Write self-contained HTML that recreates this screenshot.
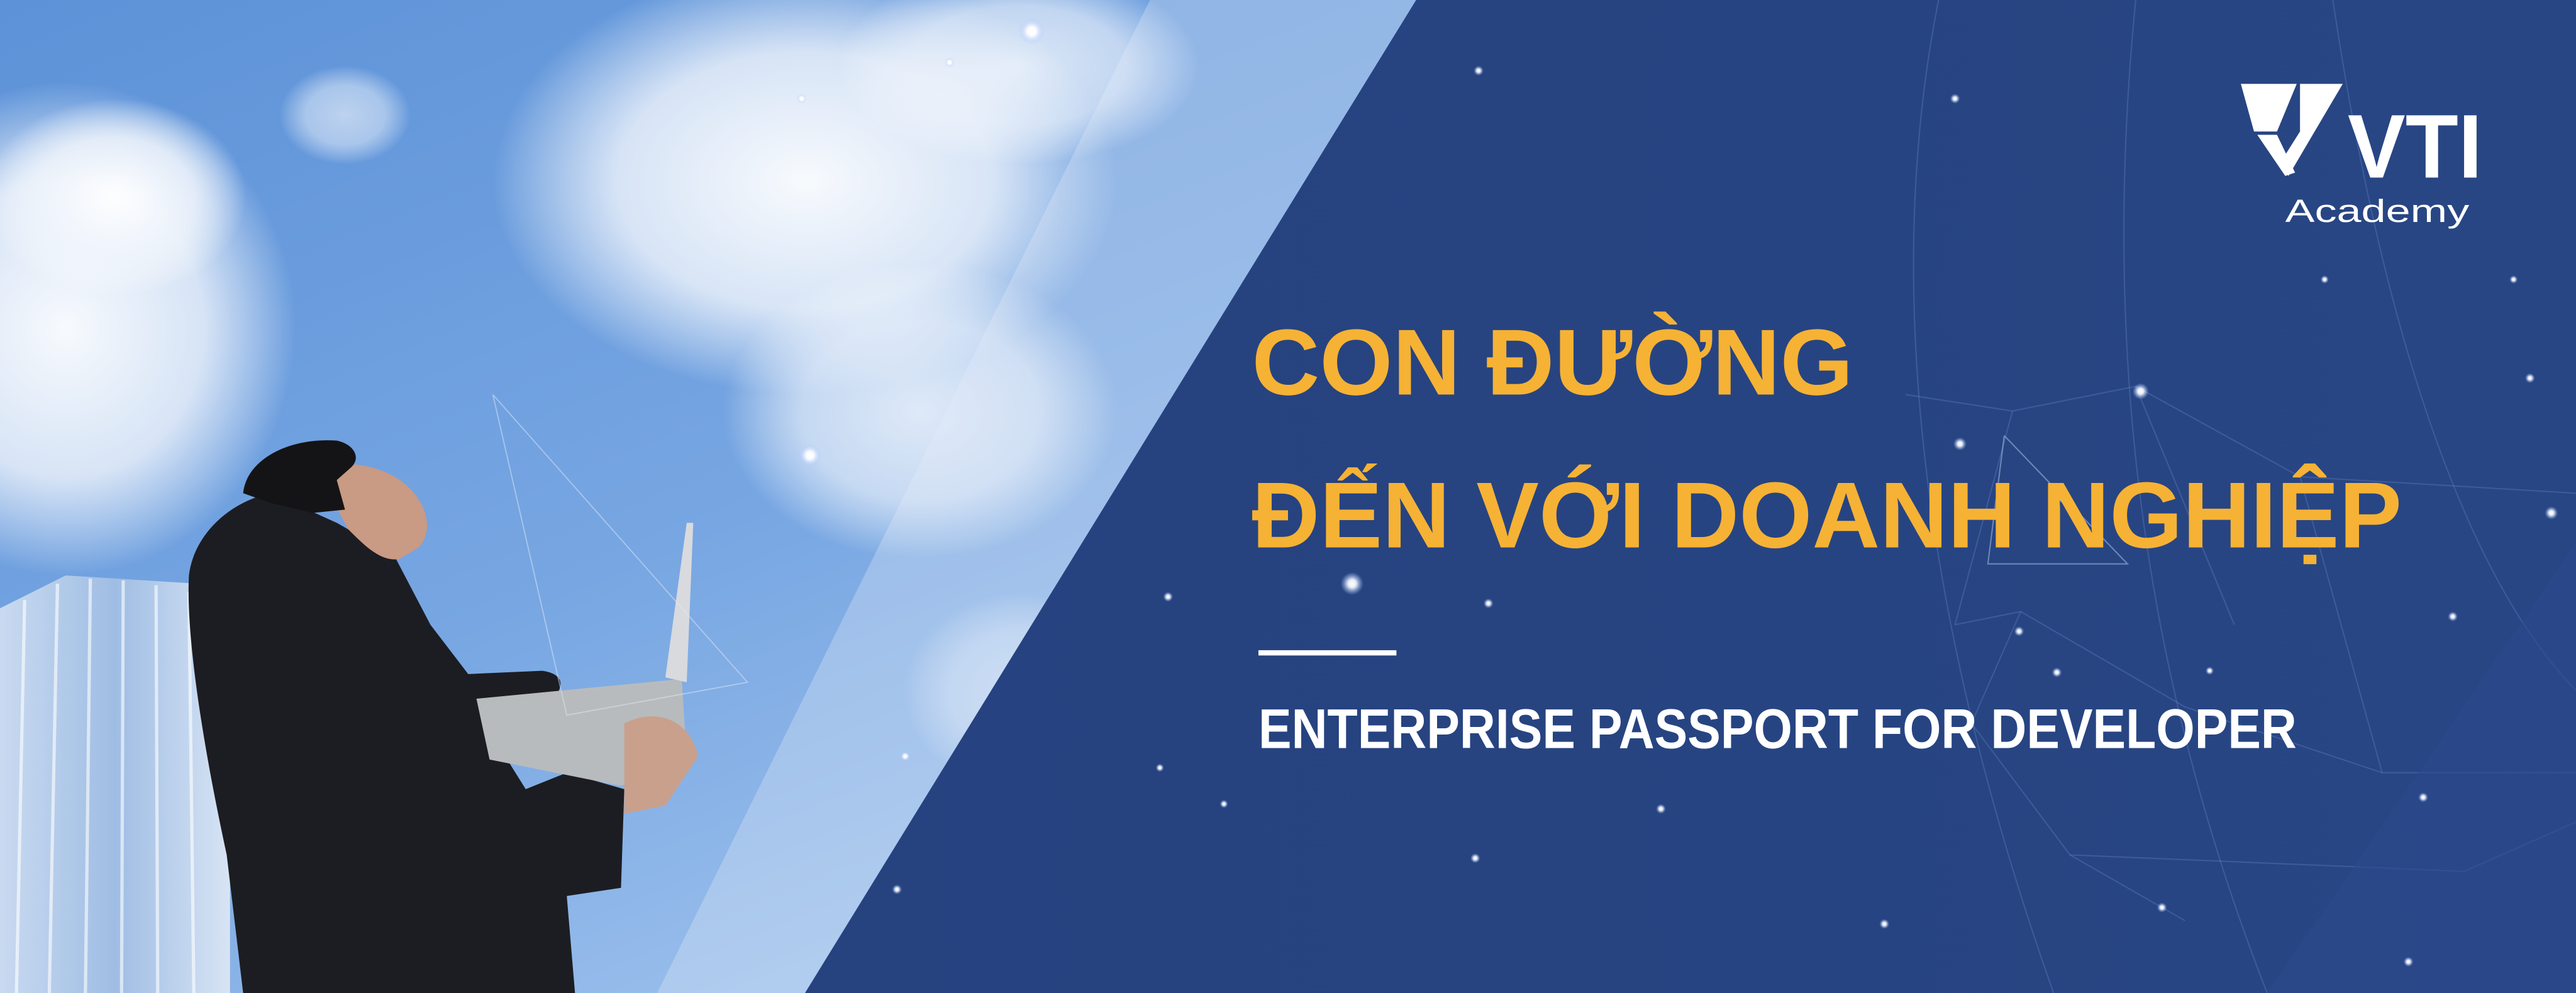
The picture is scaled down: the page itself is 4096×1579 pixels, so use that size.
<!DOCTYPE html>
<html><head><meta charset="utf-8"><style>
html,body{margin:0;padding:0;width:4096px;height:1579px;overflow:hidden;background:#27437f}
svg{display:block}
</style></head><body>
<svg width="4096" height="1579" viewBox="0 0 1568 604" preserveAspectRatio="none" xmlns="http://www.w3.org/2000/svg">
<defs>
<linearGradient id="sky" x1="0" y1="0" x2="0.6" y2="1">
<stop offset="0" stop-color="#5d92d8"/><stop offset="0.6" stop-color="#77a6e2"/><stop offset="1" stop-color="#9cc0ec"/>
</linearGradient>
<radialGradient id="cl" cx="0.5" cy="0.5" r="0.5">
<stop offset="0" stop-color="#ffffff" stop-opacity="0.95"/><stop offset="0.6" stop-color="#f2f6fc" stop-opacity="0.8"/><stop offset="1" stop-color="#ffffff" stop-opacity="0"/>
</radialGradient>
<linearGradient id="bld" x1="0" y1="0" x2="1" y2="0">
<stop offset="0" stop-color="#c9daf0"/><stop offset="0.5" stop-color="#9fbde4"/><stop offset="1" stop-color="#d7e4f4"/>
</linearGradient>
<linearGradient id="blue" x1="0" y1="0" x2="1" y2="0">
<stop offset="0" stop-color="#26427f"/><stop offset="1" stop-color="#284684"/>
</linearGradient>
<radialGradient id="glow" cx="0.5" cy="0.5" r="0.5">
<stop offset="0" stop-color="#ffffff"/><stop offset="0.35" stop-color="#ffffff" stop-opacity="0.9"/><stop offset="1" stop-color="#9fc0ff" stop-opacity="0"/>
</radialGradient>
</defs>
<rect width="900" height="604" fill="url(#sky)"/>
<ellipse cx="40" cy="200" rx="140" ry="150" fill="url(#cl)"/>
<ellipse cx="70" cy="120" rx="80" ry="60" fill="url(#cl)"/>
<ellipse cx="490" cy="110" rx="190" ry="130" fill="url(#cl)"/>
<ellipse cx="560" cy="250" rx="120" ry="90" fill="url(#cl)" opacity="0.8"/>
<ellipse cx="210" cy="70" rx="40" ry="30" fill="url(#cl)" opacity="0.6"/>
<ellipse cx="620" cy="40" rx="110" ry="60" fill="url(#cl)" opacity="0.8"/>
<ellipse cx="620" cy="420" rx="70" ry="60" fill="url(#cl)" opacity="0.5"/>
<polygon points="0,370 40,350 120,355 140,380 140,604 0,604" fill="url(#bld)"/>
<g stroke="#ffffff" stroke-opacity="0.6" stroke-width="2">
<line x1="15" y1="365" x2="10" y2="604"/><line x1="35" y1="355" x2="30" y2="604"/><line x1="55" y1="352" x2="52" y2="604"/><line x1="75" y1="353" x2="74" y2="604"/><line x1="95" y1="356" x2="96" y2="604"/><line x1="115" y1="360" x2="118" y2="604"/>
</g>
<!-- man -->
<path d="M205,318 L240,338 L262,380 L285,410 L330,408 C345,410 345,420 330,430 L295,440 L320,480 L345,470 L380,480 L378,540 L345,545 L350,604 L148,604 L138,520 C125,460 113,390 115,350 C118,325 140,305 165,300 Z" fill="#1c1d22"/>
<path d="M190,285 C215,278 240,285 252,300 C262,312 262,325 255,333 L243,340 C232,342 222,332 212,322 L200,300 Z" fill="#c99a84"/>
<path d="M148,300 C150,280 175,266 205,268 C215,270 220,278 214,284 L205,292 L210,310 L190,312 L165,306 Z" fill="#141416"/>
<polygon points="290,425 415,413 418,462 378,478 298,462" fill="#b8bbbd"/>
<polygon points="405,412 418,318 422,318 418,415" fill="#d8dade"/>
<path d="M380,440 C400,430 420,438 425,460 L405,490 L380,495 Z" fill="#c9a08c"/>
<polygon points="700,0 862,0 490,604 400,604" fill="#e8eef8" opacity="0.3"/>
<polygon points="862,0 1568,0 1568,604 490,604" fill="url(#blue)"/>
<g stroke="#6f8fd0" stroke-opacity="0.3" stroke-width="0.8" fill="none">
<path d="M1180,0 C1150,150 1160,350 1250,604"/>
<path d="M1300,0 C1280,200 1300,400 1380,604"/>
<path d="M1420,0 C1450,200 1500,350 1568,420"/>
<path d="M1160,240 L1225,250 L1300,235 L1400,290 L1568,300"/>
<path d="M1190,380 L1230,372 L1330,430 L1450,470 L1568,470"/>
<path d="M1230,372 L1200,440 L1260,520 L1330,560"/>
<path d="M1225,250 L1190,380"/>
<path d="M1300,235 L1360,380"/>
<path d="M1400,290 L1450,470"/>
<path d="M1260,520 L1500,530 L1568,500"/>
<polyline points="1220,265 1295,343 1210,343 1220,265" stroke="#9fb4de" stroke-opacity="0.6"/>
<polygon points="1568,330 1380,604 1568,604" fill="#2b4a8c" stroke="none" opacity="0.6"/>
</g>
<polyline points="300,240 455,415 345,435 300,240" stroke="#dfe8f7" stroke-opacity="0.5" stroke-width="0.7" fill="none"/>
<g fill="url(#glow)">
<circle cx="628" cy="19" r="8"/><circle cx="493" cy="277" r="7"/><circle cx="823" cy="355" r="7"/>
<circle cx="488" cy="60" r="3"/><circle cx="900" cy="43" r="3"/><circle cx="578" cy="38" r="3"/>
<circle cx="1193" cy="270" r="4"/><circle cx="1303" cy="238" r="5"/><circle cx="1553" cy="312" r="4"/>
<circle cx="1255" cy="303" r="3"/><circle cx="1229" cy="384" r="3"/><circle cx="1252" cy="409" r="3"/>
<circle cx="1493" cy="375" r="3"/><circle cx="906" cy="367" r="3"/><circle cx="711" cy="363" r="3"/>
<circle cx="1011" cy="492" r="3"/><circle cx="898" cy="522" r="3"/><circle cx="1147" cy="562" r="3"/>
<circle cx="1316" cy="552" r="3"/><circle cx="551" cy="460" r="3"/><circle cx="546" cy="541" r="3"/>
<circle cx="1466" cy="585" r="3"/><circle cx="745" cy="489" r="2.5"/><circle cx="706" cy="467" r="2.5"/>
<circle cx="1345" cy="408" r="2.5"/><circle cx="1415" cy="170" r="2.5"/><circle cx="1530" cy="170" r="2.5"/>
<circle cx="1190" cy="60" r="3"/><circle cx="1540" cy="230" r="3"/><circle cx="1475" cy="485" r="3"/>
</g>
<g font-family="'Liberation Sans','DejaVu Sans',sans-serif" font-weight="bold">
<text x="762" y="240" font-size="57" fill="#f6b234" textLength="366" lengthAdjust="spacingAndGlyphs">CON ĐƯỜNG</text>
<text x="762" y="333" font-size="57" fill="#f6b234" textLength="700" lengthAdjust="spacingAndGlyphs">ĐẾN VỚI DOANH NGHIỆP</text>
<rect x="766" y="395.5" width="84" height="3.2" fill="#ffffff"/>
<text x="766" y="455" font-size="34" fill="#ffffff" textLength="632" lengthAdjust="spacingAndGlyphs">ENTERPRISE PASSPORT FOR DEVELOPER</text>
</g>
<g fill="#ffffff">
<polygon points="1364,51 1398,51 1386,80 1372,80"/>
<polygon points="1374,82 1386,82 1397,105 1391,107"/>
<polygon points="1400,51 1426,51 1393,107 1388,99 1400,80"/>
<text x="1429" y="108" font-family="'Liberation Sans',sans-serif" font-weight="bold" font-size="55" textLength="82" lengthAdjust="spacingAndGlyphs">VTI</text>
<text x="1391" y="135" font-family="'Liberation Sans',sans-serif" font-size="19.5" textLength="112" lengthAdjust="spacingAndGlyphs">Academy</text>
</g>
</svg>
</body></html>
